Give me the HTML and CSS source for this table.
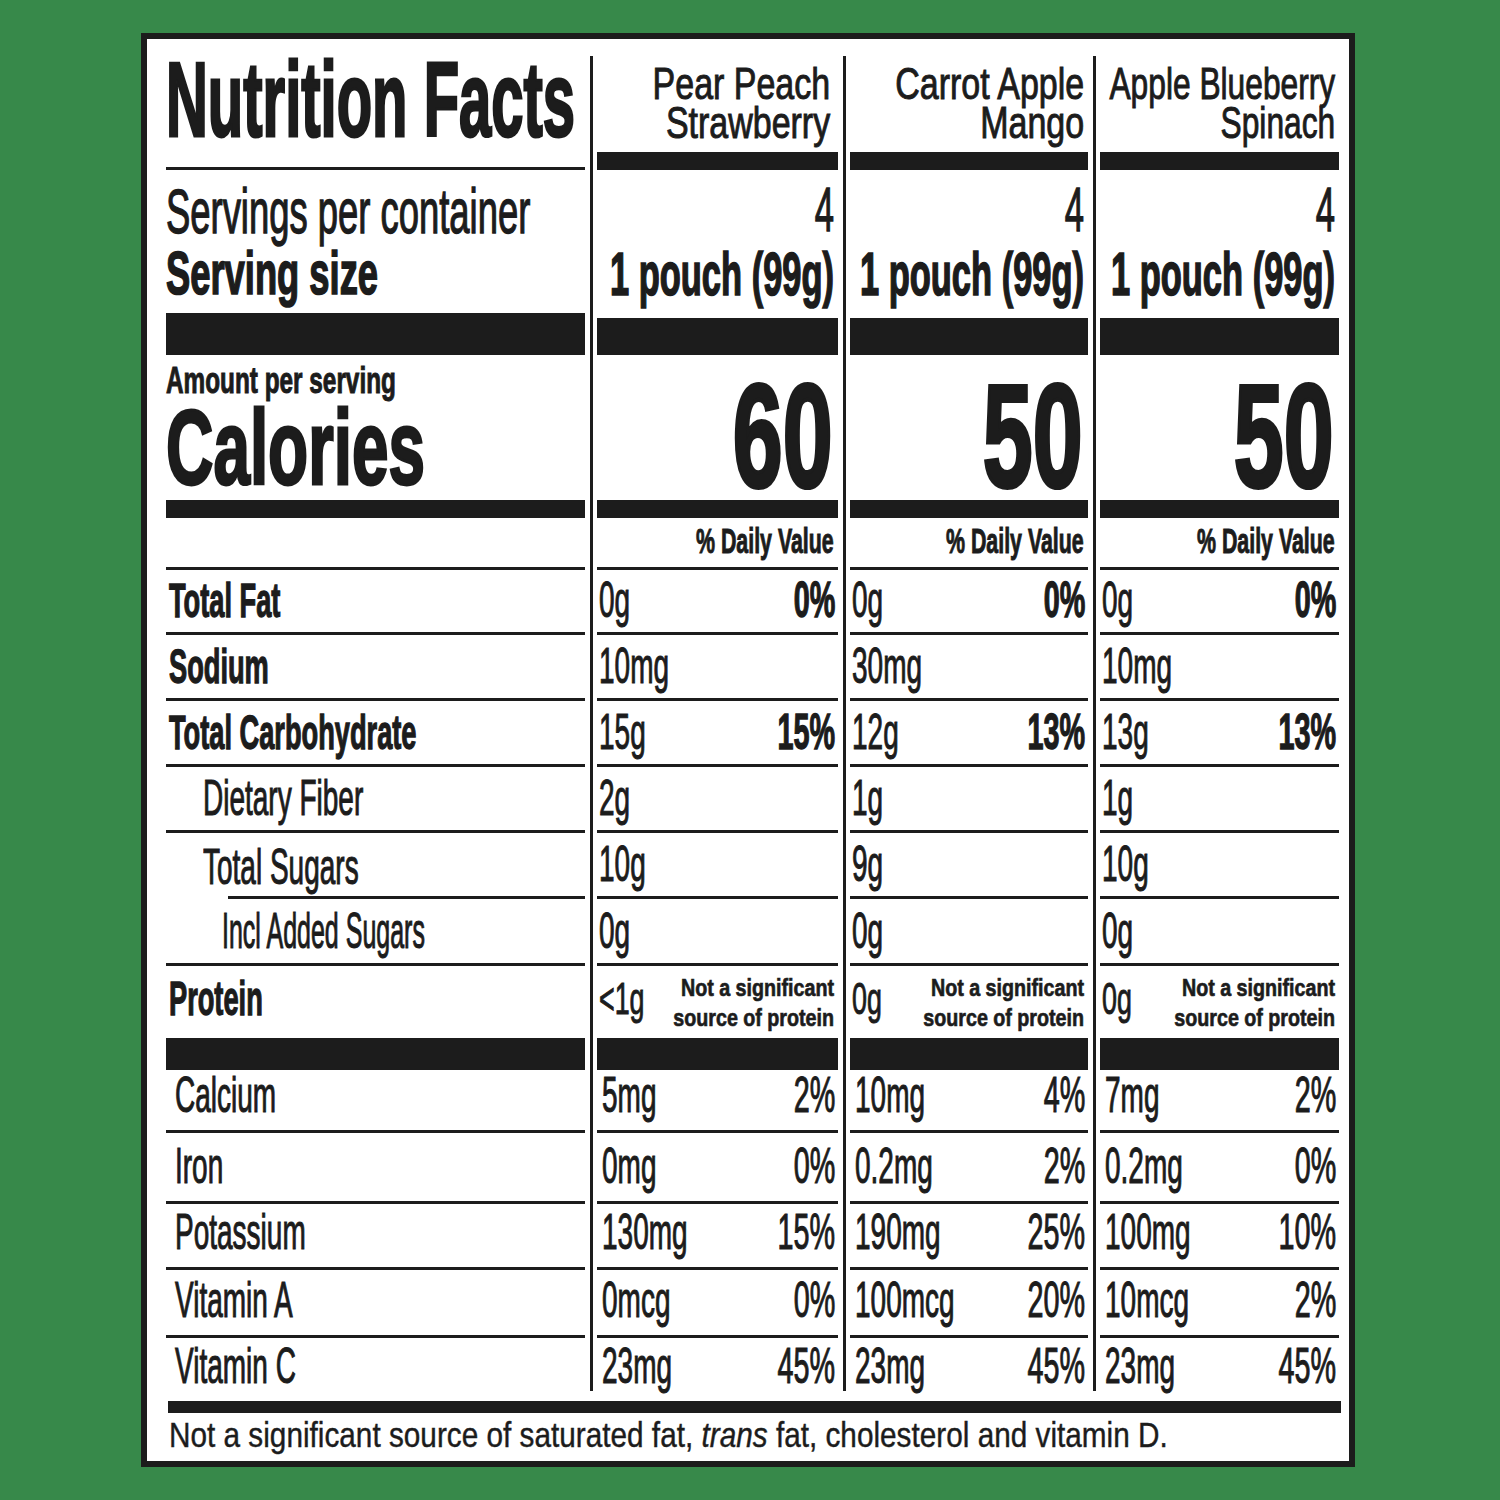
FILE: index.html
```html
<!DOCTYPE html>
<html lang="en">
<head>
<meta charset="utf-8">
<title>Nutrition Facts</title>
<link rel="stylesheet" href="styles.css">
</head>
<body>
<div class="label">
  <div class="grid">
    <div class="sep s1"></div>
    <div class="sep s2"></div>
    <div class="sep s3"></div>

    <!-- Row A: title / product names -->
    <div class="c ra"><span class="t b title">Nutrition Facts</span></div>
    <div class="c rah h1"><span class="t r hd">Pear Peach<br>Strawberry</span></div>
    <div class="c rah"><span class="t r hd">Carrot Apple<br>Mango</span></div>
    <div class="c rah"><span class="t r hd hd3">Apple Blueberry<br>Spinach</span></div>

    <!-- Row B: servings -->
    <div class="c rb"><span class="t spc">Servings per container</span><span class="t b ssz">Serving size</span></div>
    <div class="c rbv"><span class="t r four">4</span><span class="t r b pouch">1 pouch (99g)</span></div>
    <div class="c rbv"><span class="t r four">4</span><span class="t r b pouch">1 pouch (99g)</span></div>
    <div class="c rbv"><span class="t r four">4</span><span class="t r b pouch">1 pouch (99g)</span></div>

    <!-- Row C: calories -->
    <div class="c rc"><span class="t b amt">Amount per serving</span><span class="t b cal">Calories</span></div>
    <div class="c rcv"><span class="t r b big">60</span></div>
    <div class="c rcv"><span class="t r b big">50</span></div>
    <div class="c rcv"><span class="t r b big">50</span></div>

    <!-- Row D: % daily value -->
    <div class="c"></div>
    <div class="c rd"><span class="t r b dv">% Daily Value</span></div>
    <div class="c rd"><span class="t r b dv">% Daily Value</span></div>
    <div class="c rd"><span class="t r b dv">% Daily Value</span></div>

    <!-- Total Fat -->
    <div class="c n"><span class="t b lb">Total Fat</span></div>
    <div class="c v"><span class="t val">0g</span><span class="t r b pct">0%</span></div>
    <div class="c v"><span class="t val">0g</span><span class="t r b pct">0%</span></div>
    <div class="c v"><span class="t val">0g</span><span class="t r b pct">0%</span></div>

    <!-- Sodium -->
    <div class="c n"><span class="t b lb">Sodium</span></div>
    <div class="c v"><span class="t val">10mg</span></div>
    <div class="c v"><span class="t val">30mg</span></div>
    <div class="c v"><span class="t val">10mg</span></div>

    <!-- Total Carbohydrate -->
    <div class="c n"><span class="t b lb">Total Carbohydrate</span></div>
    <div class="c v"><span class="t val">15g</span><span class="t r b pct">15%</span></div>
    <div class="c v"><span class="t val">12g</span><span class="t r b pct">13%</span></div>
    <div class="c v"><span class="t val">13g</span><span class="t r b pct">13%</span></div>

    <!-- Dietary Fiber -->
    <div class="c n in1"><span class="t lr">Dietary Fiber</span></div>
    <div class="c v"><span class="t val">2g</span></div>
    <div class="c v"><span class="t val">1g</span></div>
    <div class="c v"><span class="t val">1g</span></div>

    <!-- Total Sugars -->
    <div class="c n in1 sug"><span class="t lr">Total Sugars</span></div>
    <div class="c v"><span class="t val">10g</span></div>
    <div class="c v"><span class="t val">9g</span></div>
    <div class="c v"><span class="t val">10g</span></div>

    <!-- Incl Added Sugars -->
    <div class="c n in2"><span class="t lr ias">Incl Added Sugars</span></div>
    <div class="c v"><span class="t val">0g</span></div>
    <div class="c v"><span class="t val">0g</span></div>
    <div class="c v"><span class="t val">0g</span></div>

    <!-- Protein -->
    <div class="c n pr"><span class="t b lb">Protein</span></div>
    <div class="c prv"><span class="t pv">&lt;1g</span><span class="t r b note">Not a significant<br>source of protein</span></div>
    <div class="c prv"><span class="t pv">0g</span><span class="t r b note">Not a significant<br>source of protein</span></div>
    <div class="c prv"><span class="t pv">0g</span><span class="t r b note">Not a significant<br>source of protein</span></div>

    <!-- Calcium -->
    <div class="c lo"><span class="t lr">Calcium</span></div>
    <div class="c lov"><span class="t val">5mg</span><span class="t r pct">2%</span></div>
    <div class="c lov"><span class="t val">10mg</span><span class="t r pct">4%</span></div>
    <div class="c lov"><span class="t val">7mg</span><span class="t r pct">2%</span></div>

    <!-- Iron -->
    <div class="c lo"><span class="t lr">Iron</span></div>
    <div class="c lov"><span class="t val">0mg</span><span class="t r pct">0%</span></div>
    <div class="c lov"><span class="t val">0.2mg</span><span class="t r pct">2%</span></div>
    <div class="c lov"><span class="t val">0.2mg</span><span class="t r pct">0%</span></div>

    <!-- Potassium -->
    <div class="c lo"><span class="t lr">Potassium</span></div>
    <div class="c lov"><span class="t val">130mg</span><span class="t r pct">15%</span></div>
    <div class="c lov"><span class="t val">190mg</span><span class="t r pct">25%</span></div>
    <div class="c lov"><span class="t val">100mg</span><span class="t r pct">10%</span></div>

    <!-- Vitamin A -->
    <div class="c lo"><span class="t lr">Vitamin A</span></div>
    <div class="c lov"><span class="t val">0mcg</span><span class="t r pct">0%</span></div>
    <div class="c lov"><span class="t val">100mcg</span><span class="t r pct">20%</span></div>
    <div class="c lov"><span class="t val">10mcg</span><span class="t r pct">2%</span></div>

    <!-- Vitamin C -->
    <div class="c lo last"><span class="t lr">Vitamin C</span></div>
    <div class="c lov last"><span class="t val">23mg</span><span class="t r pct">45%</span></div>
    <div class="c lov last"><span class="t val">23mg</span><span class="t r pct">45%</span></div>
    <div class="c lov last"><span class="t val">23mg</span><span class="t r pct">45%</span></div>
  </div>
  <div class="fbar"></div>
  <p class="foot"><span class="t ft">Not a significant source of saturated fat, <i>trans</i> fat, cholesterol and vitamin D.</span></p>
</div>
</body>
</html>
```

FILE: styles.css
```css
html, body {
  margin: 0;
  padding: 0;
}

body {
  background: #37894a;
  font-family: "Liberation Sans", Arial, sans-serif;
  color: #1c1c1c;
  width: 1500px;
  height: 1500px;
  overflow: hidden;
}

.label {
  margin: 33px 0 0 141px;
  width: 1214px;
  box-sizing: border-box;
  border: 6px solid #1c1c1c;
  background: #fff;
  padding: 17px 9px 9px 19px;
}

.grid {
  display: grid;
  grid-template-columns: 419px 12px 241px 12px 238px 12px 239px;
  grid-template-rows: 114px 185px 163px 52px 65px 66px 66px 66px 66px 67px 104px 63px 71px 66px 68px 53px;
}

.sep {
  grid-row: 1 / -1;
  background: linear-gradient(#1c1c1c, #1c1c1c) center / 3px 100% no-repeat;
}
.s1 { grid-column: 2; }
.s2 { grid-column: 4; }
.s3 { grid-column: 6; }

.c {
  display: flex;
  align-items: flex-end;
  box-sizing: border-box;
  border-bottom: 3px solid #1c1c1c;
  min-width: 0;
}

/* condensed text: Arial-width face squeezed horizontally */
.t {
  display: inline-block;
  white-space: nowrap;
  line-height: 1;
  flex: none;
  transform: scaleX(var(--s, 0.56));
  transform-origin: left center;
  -webkit-text-stroke: 0.022em currentColor;
}
.r {
  transform-origin: right center;
  margin-left: -300px;
}
.b {
  font-weight: 700;
  -webkit-text-stroke: 0.028em currentColor;
}

/* Row A */
.ra { padding-bottom: 15px; }
.rah {
  border-bottom-width: 18px;
  justify-content: flex-end;
  padding: 0 4px 10px 0;
}
.h1 { padding-right: 8px; }
.rah .t {
  font-size: 45px;
  line-height: 39px;
  text-align: right;
}

/* Row B */
.rb {
  border-bottom-width: 42px;
  flex-direction: column;
  align-items: flex-start;
  justify-content: flex-end;
  padding-bottom: 9px;
}
.rbv {
  border-bottom-width: 37px;
  flex-direction: column;
  align-items: flex-end;
  justify-content: flex-end;
  padding: 0 4px 13px 0;
}
.rb .t, .rbv .t { line-height: 62px; }

/* Row C */
.rc {
  border-bottom-width: 18px;
  flex-direction: column;
  align-items: flex-start;
  justify-content: flex-end;
}
.rcv {
  border-bottom-width: 18px;
  justify-content: flex-end;
  padding: 0 5px 1px 0;
}

/* Row D */
.rd {
  justify-content: flex-end;
  padding: 0 4px 9px 0;
}

/* nutrient rows */
.n { padding: 0 0 7px 3px; }
.in1 { padding-left: 37px; }
.in2 { padding-left: 56px; }
.sug {
  border-bottom: none;
  background: linear-gradient(#1c1c1c, #1c1c1c) right bottom / calc(100% - 62px) 3px no-repeat;
}
.v {
  justify-content: space-between;
  padding: 0 3px 7px 2px;
}
.pr {
  border-bottom-width: 32px;
  padding-bottom: 15px;
}
.prv {
  border-bottom-width: 32px;
  justify-content: space-between;
  padding: 0 4px 5px 2px;
}
.lo { padding: 0 0 10px 9px; }
.lov {
  justify-content: space-between;
  padding: 0 3px 10px 5px;
}
.last {
  border-bottom: none;
  padding-bottom: 0;
}

/* text sizes and condensing factors */
.title { font-size: 106px; --s: 0.547; }
.hd { --s: 0.755; }
.hd3 { --s: 0.705; }
.spc { font-size: 63px; --s: 0.578; }
.ssz { font-size: 62px; --s: 0.586; }
.four { font-size: 63px; --s: 0.55; margin-bottom: 3px; }
.pouch { font-size: 62px; --s: 0.556; }
.amt { font-size: 36px; --s: 0.676; margin-bottom: -4px; }
.cal { font-size: 105px; --s: 0.625; }
.big { font-size: 147px; line-height: 0.85; --s: 0.61; }
.dv { font-size: 35px; --s: 0.61; }
.lb { font-size: 48px; --s: 0.567; }
.lr { font-size: 50px; --s: 0.56; }
.ias { --s: 0.5; }
.val { font-size: 50px; --s: 0.56; }
.pct { font-size: 50px; --s: 0.575; }
.pv { font-size: 44px; --s: 0.61; margin-bottom: 12px; }
.note { font-size: 24px; line-height: 30px; --s: 0.82; text-align: right; }

/* footer */
.fbar {
  height: 12px;
  width: 1173px;
  margin: 10px 0 0 2px;
  background: #1c1c1c;
}
.foot {
  display: flex;
  margin: 4px 0 0 3px;
}
.ft { font-size: 35px; --s: 0.85; -webkit-text-stroke: 0.012em currentColor; }
```
